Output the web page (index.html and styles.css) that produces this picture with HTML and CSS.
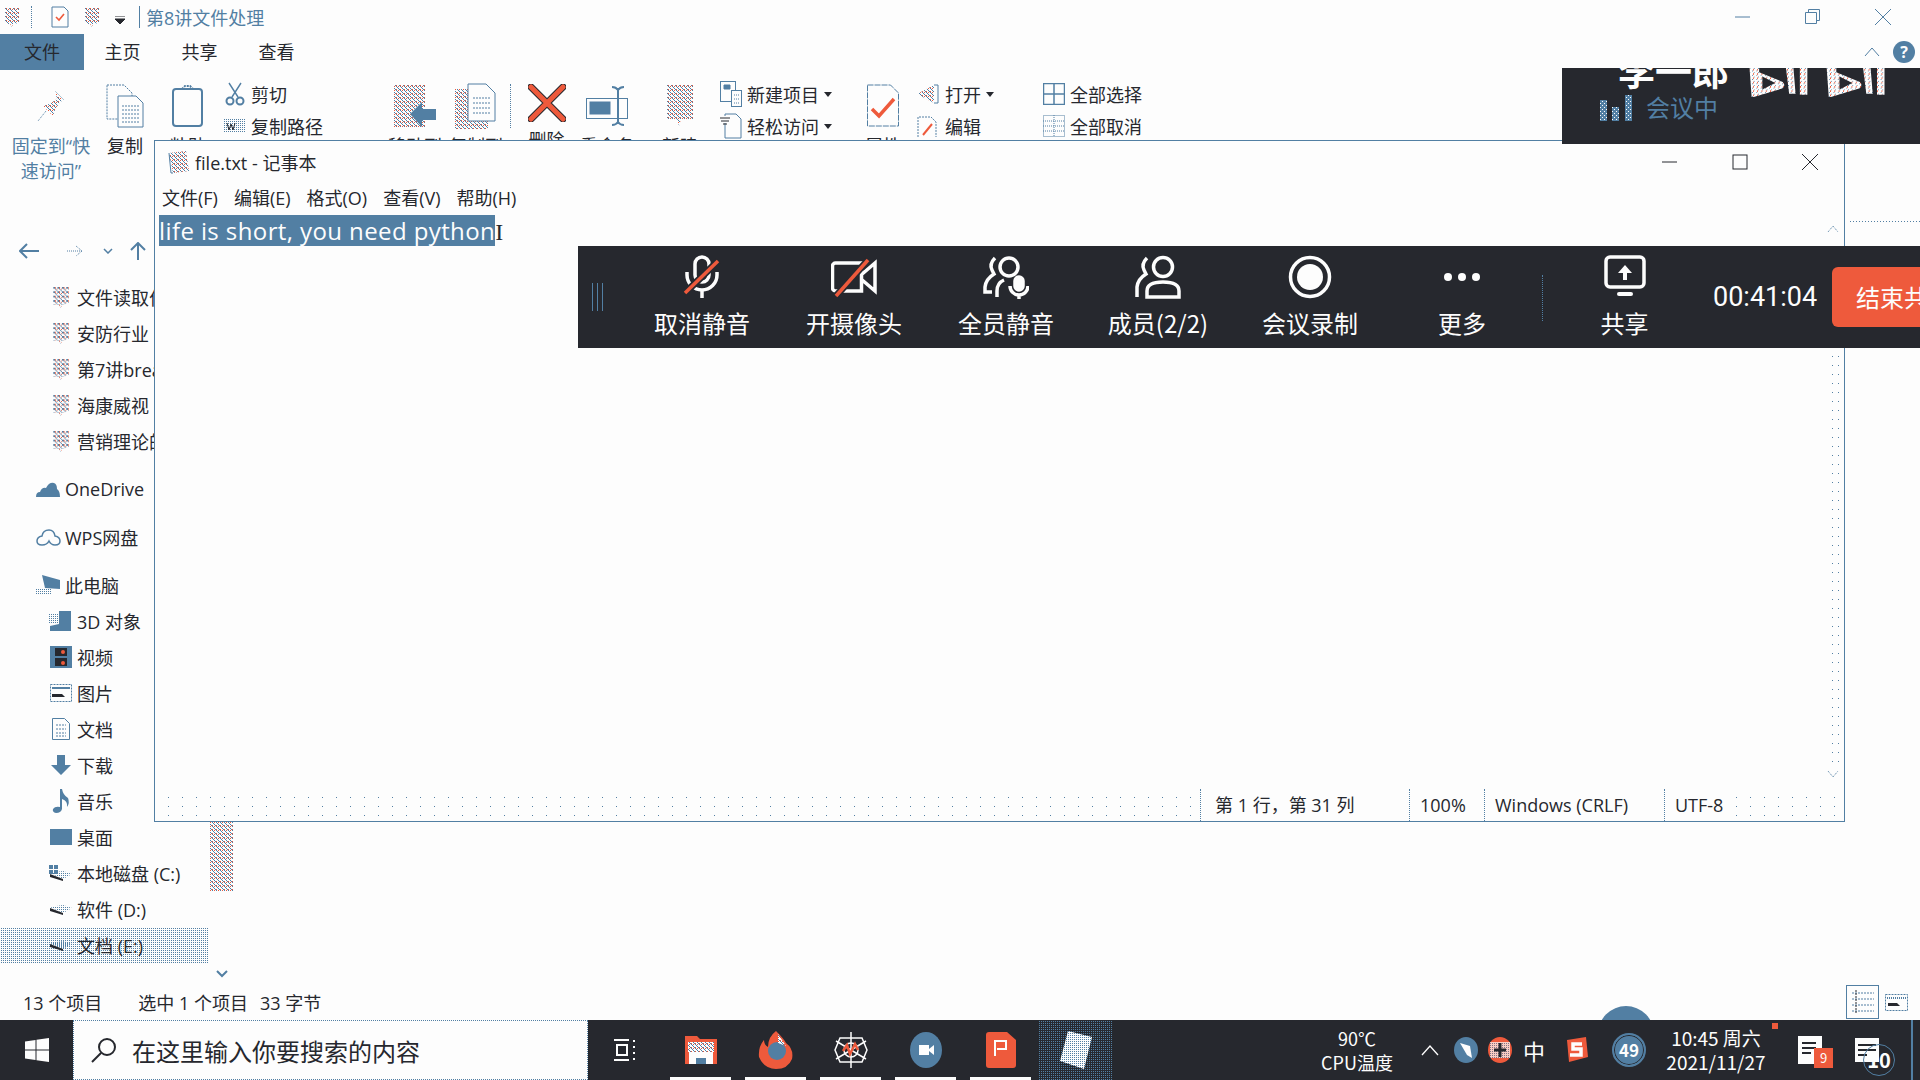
FILE: index.html
```html
<!DOCTYPE html>
<html lang="zh-CN">

<head>
    <meta charset="UTF-8">
    <title>file.txt - 记事本</title>
    <link rel="stylesheet" href="styles.css">
</head>

<body>
    <svg class="defs" width="0" height="0">
        <defs>
            <pattern id="dith" width="4" height="4" patternUnits="userSpaceOnUse" shape-rendering="crispEdges">
                <rect width="4" height="4" fill="#fdfdfd" />
                <rect width="1" height="1" fill="#527fa3" />
                <rect x="2" y="1" width="1" height="1" fill="#ee5a3c" />
                <rect x="1" y="1" width="1" height="1" fill="#527fa3" />
                <rect x="0" y="2" width="1" height="1" fill="#ee5a3c" />
                <rect x="2" y="2" width="1" height="1" fill="#527fa3" />
                <rect x="3" y="3" width="1" height="1" fill="#527fa3" />
            </pattern>
            <pattern id="dith-w" width="4" height="4" patternUnits="userSpaceOnUse" shape-rendering="crispEdges">
                <rect width="4" height="4" fill="#fdfdfd" />
                <rect width="1" height="1" fill="#527fa3" />
                <rect x="2" y="2" width="1" height="1" fill="#527fa3" />
                <rect x="3" y="1" width="1" height="1" fill="#ee5a3c" />
            </pattern>
            <pattern id="dith-b" width="4" height="4" patternUnits="userSpaceOnUse" shape-rendering="crispEdges">
                <rect width="4" height="4" fill="#527fa3" />
                <rect width="1" height="1" fill="#fdfdfd" />
                <rect x="2" y="2" width="1" height="1" fill="#fdfdfd" />
            </pattern>
            <pattern id="dots" width="2" height="2" patternUnits="userSpaceOnUse" shape-rendering="crispEdges">
                <rect width="1" height="1" fill="#527fa3" />
            </pattern>
            <pattern id="dots-w" width="2" height="2" patternUnits="userSpaceOnUse" shape-rendering="crispEdges">
                <rect width="2" height="2" fill="#fdfdfd" />
                <rect width="1" height="1" fill="#527fa3" />
            </pattern>
            <symbol id="ppt" viewBox="0 0 16 20">
                <path d="M1 1h14v15l-6 1-1 3-2-3H1z" fill="url(#dith)" />
            </symbol>
            <symbol id="drive" viewBox="0 0 24 12">
                <path d="M1 4l13 6 9-5-9-3z" fill="url(#dots)" />
                <path d="M1 5l13 5v2L1 8z" fill="#26282e" />
            </symbol>
        </defs>
    </svg>

    <!-- 资源管理器 -->
    <div class="explorer">
        <div class="title-bar">
            <svg class="qa-ppt" width="16" height="20"><use href="#ppt" /></svg>
            <span class="qa-sep"></span>
            <svg class="qa-check" width="18" height="22" viewBox="0 0 18 22">
                <path d="M1 1h12l4 4v16H1z" fill="none" stroke="#527fa3" />
                <path d="M5 11l3 3 5-6" fill="none" stroke="#ee5a3c" stroke-width="1.6" />
            </svg>
            <svg class="qa-ppt2" width="16" height="20"><use href="#ppt" /></svg>
            <svg class="qa-caret" width="10" height="8" viewBox="0 0 10 8">
                <path d="M0 0h10M0 3h10L5 8z" stroke="#26282e" fill="#26282e" />
            </svg>
            <span class="qa-sep qa-sep2"></span>
            <span class="title-text">第8讲文件处理</span>
            <div class="win-btns">
                <svg width="16" height="16" viewBox="0 0 16 16"><path d="M0 8h15" stroke="#527fa3" /></svg>
                <svg width="16" height="16" viewBox="0 0 16 16" fill="none" stroke="#527fa3"><path d="M.5 3.500h11v11H.5zM3.500 3V.5h11v11H12" /></svg>
                <svg width="16" height="16" viewBox="0 0 16 16"><path d="M0 0l16 16M16 0L0 16" stroke="#527fa3" /></svg>
            </div>
        </div>

        <div class="tabs">
            <div class="tab tab-file">文件</div>
            <div class="tab">主页</div>
            <div class="tab">共享</div>
            <div class="tab">查看</div>
            <div class="tab-side">
                <svg width="16" height="10" viewBox="0 0 16 10"><path d="M1 9l7-8 7 8" fill="none" stroke="#527fa3" /></svg>
                <div class="help">?</div>
            </div>
        </div>

        <div class="ribbon">
            <div class="big-btn big-blue">
                <div class="big-icon">
                    <svg width="30" height="36" viewBox="0 0 30 36">
                        <path d="M19 3l9 9-4 2-5 8-2 6-10-10 6-2 8-5z" fill="url(#dith)" />
                        <path d="M10 23L2 33" stroke="#527fa3" stroke-dasharray="1 1" />
                    </svg>
                </div>
                <span>固定到“快<br>速访问”</span>
            </div>
            <div class="big-btn">
                <div class="big-icon">
                    <svg width="38" height="44" viewBox="0 0 38 44" fill="#fdfdfd" stroke="#527fa3">
                        <path d="M1 1h17l8 8v26H1z" stroke-dasharray="2 1" />
                        <path d="M12 12h18l7 7v24H12z" />
                        <path d="M16 22h17M16 26h17M16 30h17M16 34h17M16 38h17" stroke-dasharray="2 1" />
                    </svg>
                </div>
                <span>复制</span>
            </div>
            <div class="big-btn">
                <div class="big-icon">
                    <svg width="32" height="44" viewBox="0 0 32 44" fill="none" stroke="#527fa3" stroke-width="2">
                        <rect x="1" y="5" width="29" height="37" rx="3" />
                        <path d="M10 5l3-3h5l3 3" stroke-dasharray="2 1" />
                    </svg>
                </div>
                <span>粘贴</span>
            </div>
            <div class="small-col">
                <div class="small-row">
                    <svg width="22" height="24" viewBox="-1 0 22 24" fill="none" stroke="#527fa3" stroke-width="2">
                        <path d="M4 1l9 14M16 1L7 15" stroke-width="1.400" />
                        <circle cx="5" cy="19" r="3.500" />
                        <circle cx="15" cy="19" r="3.500" />
                    </svg>
                    剪切
                </div>
                <div class="small-row">
                    <svg width="22" height="14" viewBox="0 0 22 14">
                        <rect width="22" height="14" fill="url(#dots)" />
                        <path d="M3 4l2 7 2-6 2 6 2-7" stroke="#26282e" fill="none" />
                    </svg>
                    复制路径
                </div>
            </div>
            <div class="big-btn">
                <div class="big-icon">
                    <svg width="42" height="44" viewBox="0 0 42 44">
                        <rect x="0" y="1" width="31" height="42" fill="url(#dith)" />
                        <path d="M16 30L28 18v7h14v11H28v7z" fill="#527fa3" />
                    </svg>
                </div>
                <span>移动到</span>
            </div>
            <div class="big-btn">
                <div class="big-icon">
                    <svg width="42" height="46" viewBox="0 0 42 46">
                        <rect x="0" y="6" width="33" height="40" fill="url(#dith)" />
                        <path d="M13 1h18l9 9v28H13z" fill="#fdfdfd" stroke="#527fa3" />
                        <path d="M18 15h18M18 20h18M18 25h18M18 30h18" stroke="#527fa3" stroke-dasharray="2 1" />
                    </svg>
                </div>
                <span>复制到</span>
            </div>
            <div class="big-btn cell-sep">
                <div class="big-icon">
                    <svg width="38" height="38" viewBox="0 0 38 38">
                        <path d="M3 3l32 32M35 3L3 35" stroke="#26282e" stroke-width="7" stroke-linecap="round" />
                        <path d="M3 3l32 32M35 3L3 35" stroke="#ee5a3c" stroke-width="5" stroke-linecap="round" />
                    </svg>
                </div>
                <span>删除</span>
            </div>
            <div class="big-btn">
                <div class="big-icon">
                    <svg width="42" height="40" viewBox="0 0 42 40" fill="none" stroke="#527fa3">
                        <rect x=".5" y="12.500" width="41" height="20" />
                        <rect x="4" y="16" width="20" height="12" fill="#527fa3" />
                        <path d="M32 2v36M26 1q4 0 6 3q2-3 6-3M26 39q4 0 6-3q2 3 6 3" stroke-width="2" />
                    </svg>
                </div>
                <span>重命名</span>
            </div>
            <div class="big-btn">
                <div class="big-icon">
                    <svg width="28" height="44" viewBox="0 0 28 44">
                        <path d="M1 1h26v34H15l-2 7-2-7H1z" fill="url(#dith)" />
                    </svg>
                </div>
                <span>新建</span>
            </div>
            <div class="small-col">
                <div class="small-row">
                    <svg width="22" height="26" viewBox="0 0 22 26" fill="#fdfdfd" stroke="#527fa3">
                        <rect x=".5" y=".5" width="15" height="20" />
                        <rect x="11.500" y="9.500" width="10" height="16" />
                        <path d="M14 14h6M14 18h6M14 22h6" stroke-dasharray="1 1" />
                        <path d="M4 4h6v4H4z" fill="#527fa3" />
                    </svg>
                    新建项目<i class="caret"></i>
                </div>
                <div class="small-row">
                    <svg width="22" height="26" viewBox="0 0 22 26" fill="none" stroke="#527fa3">
                        <path d="M5 10v15h16V6l-5-5H5v2" />
                        <path d="M0 5h10M1 8h8M3 11h4" stroke="#26282e" />
                    </svg>
                    轻松访问<i class="caret"></i>
                </div>
            </div>
            <div class="big-btn">
                <div class="big-icon">
                    <svg width="32" height="44" viewBox="0 0 32 44" fill="none">
                        <path d="M.5 1h23l8 8v33H.5z" stroke="#527fa3" stroke-dasharray="6 1" />
                        <path d="M5 25l7 7 15-17" stroke="#ee5a3c" stroke-width="3.500" />
                    </svg>
                </div>
                <span>属性</span>
            </div>
            <div class="small-col">
                <div class="small-row">
                    <svg width="24" height="24" viewBox="0 0 24 24">
                        <path d="M1 12l17-9v18z" fill="url(#dith)" />
                        <path d="M18 3h4v18h-4" fill="none" stroke="#527fa3" />
                    </svg>
                    打开<i class="caret"></i>
                </div>
                <div class="small-row">
                    <svg width="24" height="24" viewBox="0 0 24 24" fill="none">
                        <path d="M2 23V3h13l5 5v15" stroke="#527fa3" stroke-dasharray="2 1" />
                        <path d="M7 21l9-11" stroke="#ee5a3c" stroke-width="2" />
                    </svg>
                    编辑
                </div>
            </div>
            <div class="small-col">
                <div class="small-row">
                    <svg width="22" height="22" viewBox="0 0 22 22" fill="none" stroke="#527fa3">
                        <path d="M.5.500h21v21H.5zM11 0v22M0 11h22" stroke-width="1.500" />
                    </svg>
                    全部选择
                </div>
                <div class="small-row">
                    <svg width="22" height="22" viewBox="0 0 22 22" fill="none" stroke="#527fa3" stroke-dasharray="1 1">
                        <path d="M.5.500h21v21H.5zM11 0v22M0 11h22M0 6h22M0 16h22" />
                    </svg>
                    全部取消
                </div>
            </div>
        </div>

        <div class="address">
            <svg width="20" height="16" viewBox="0 0 20 16"><path d="M8 1L1 8l7 7M1 8h19" fill="none" stroke="#527fa3" stroke-width="2" /></svg>
            <svg class="addr-next" width="16" height="12" viewBox="0 0 16 12"><path d="M9 1l6 5-6 5M0 6h15" fill="none" stroke="#527fa3" stroke-dasharray="1 1" /></svg>
            <svg class="addr-down" width="10" height="6" viewBox="0 0 10 6"><path d="M1 1l4 4 4-4" fill="none" stroke="#527fa3" stroke-width="1.500" /></svg>
            <svg class="addr-up" width="16" height="18" viewBox="0 0 16 18"><path d="M1 8l7-7 7 7M8 1v17" fill="none" stroke="#527fa3" stroke-width="2" /></svg>
        </div>

        <div class="middle">
            <div class="tree">
                <div class="row"><svg width="18" height="22"><use href="#ppt" /></svg>文件读取作业</div>
                <div class="row"><svg width="18" height="22"><use href="#ppt" /></svg>安防行业</div>
                <div class="row"><svg width="18" height="22"><use href="#ppt" /></svg>第7讲break</div>
                <div class="row"><svg width="18" height="22"><use href="#ppt" /></svg>海康威视</div>
                <div class="row"><svg width="18" height="22"><use href="#ppt" /></svg>营销理论的</div>
                <div class="row top-row group-gap">
                    <svg width="24" height="16" viewBox="0 0 24 16"><path d="M0 16q0-5 4-5 2-5 6-4 3-6 8-5 3 1 3 6 3 2 3 8z" fill="#527fa3" /></svg>OneDrive
                </div>
                <div class="row top-row group-gap">
                    <svg width="25" height="18" viewBox="0 0 25 18"><path d="M6 17q-5 0-5-4 0-4 5-5 1-6 7-6 5 0 6 6 5 1 5 5 0 4-5 4-4 0-6-4-2 4-7 4z" fill="none" stroke="#527fa3" stroke-width="1.500" /></svg>WPS网盘
                </div>
                <div class="row top-row group-gap">
                    <svg width="24" height="20" viewBox="0 0 24 20"><path d="M6 0l18 5v9l-15-1z" fill="#527fa3" /><rect y="14" width="16" height="6" fill="url(#dots)" /></svg>此电脑
                </div>
                <div class="row">
                    <svg width="24" height="22" viewBox="0 0 24 22"><path d="M10 1h12v20H1v-5l9-2z" fill="#527fa3" /><rect y="3" width="10" height="11" fill="url(#dots)" /></svg>3D 对象
                </div>
                <div class="row">
                    <svg width="22" height="22" viewBox="0 0 22 22"><rect width="22" height="22" fill="#527fa3" /><rect x="5" y="2" width="12" height="8" fill="#26282e" /><rect x="5" y="12" width="12" height="8" fill="#26282e" /><circle cx="13" cy="6" r="2" fill="#ee5a3c" /><circle cx="13" cy="17" r="2" fill="#ee5a3c" /></svg>视频
                </div>
                <div class="row">
                    <svg width="22" height="18" viewBox="0 0 22 18"><rect x=".5" y=".5" width="21" height="17" fill="none" stroke="#527fa3" stroke-dasharray="2 1" /><path d="M2 4h18" stroke="#527fa3" stroke-width="2" /><path d="M2 10h10l3 3H2z" fill="#26282e" /></svg>图片
                </div>
                <div class="row">
                    <svg width="18" height="22" viewBox="0 0 18 22"><path d="M.5.500h12l5 5v16H.5z" fill="none" stroke="#527fa3" /><path d="M4 7h10M4 11h10M4 15h10M4 18h10" stroke="#527fa3" stroke-dasharray="2 1" /></svg>文档
                </div>
                <div class="row">
                    <svg width="20" height="20" viewBox="0 0 20 20"><path d="M6 0h8v10h6l-10 10L0 10h6z" fill="#527fa3" /></svg>下载
                </div>
                <div class="row">
                    <svg width="18" height="24" viewBox="0 0 18 24"><path d="M8 0h2q1 6 6 9 2 5-1 9 1-6-5-8v10q-1 4-6 4-4-1-3-4 2-3 7-2z" fill="#527fa3" /></svg>音乐
                </div>
                <div class="row">
                    <svg width="22" height="16" viewBox="0 0 22 16"><rect width="22" height="16" fill="#527fa3" /></svg>桌面
                </div>
                <div class="row">
                    <svg width="24" height="16" viewBox="0 0 24 16"><path d="M0 0h4v4H0zM5 0h4v4H5zM0 5h4v4H0zM5 5h4v4H5z" fill="#527fa3" /><use href="#drive" y="4" width="24" height="12" /></svg>本地磁盘 (C:)
                </div>
                <div class="row">
                    <svg width="24" height="12"><use href="#drive" /></svg>软件 (D:)
                </div>
                <div class="row row-selected">
                    <svg width="24" height="12"><use href="#drive" /></svg>文档 (E:)
                </div>
            </div>
            <div class="tree-scroll">
                <svg class="thumb" width="23" height="103"><rect width="23" height="103" fill="url(#dith)" /></svg>
                <svg class="tree-down" width="12" height="8" viewBox="0 0 12 8"><path d="M1 1l5 5 5-5" fill="none" stroke="#527fa3" stroke-width="2" /></svg>
            </div>
        </div>

        <div class="status">
            <span class="status-count">13 个项目</span>
            <span class="status-sel">选中 1 个项目</span>
            <span class="status-size">33 字节</span>
            <div class="view-btns">
                <div class="view-on">
                    <svg width="24" height="24" viewBox="0 0 24 24" stroke="#527fa3" stroke-dasharray="2 1"><path d="M1 3h22M1 9h22M1 15h22M1 21h22" /><path d="M5 0v24" stroke="#26282e" /></svg>
                </div>
                <svg width="23" height="17" viewBox="0 0 23 17"><rect x=".5" y=".5" width="22" height="16" fill="none" stroke="#527fa3" stroke-dasharray="2 1" /><path d="M2 4h19" stroke="#527fa3" stroke-dasharray="1 1" stroke-width="2" /><path d="M3 9h9l3 3H3z" fill="#26282e" /></svg>
            </div>
        </div>
    </div>

    <div class="bubble"></div>

    <!-- 记事本窗口 -->
    <div class="notepad">
        <div class="np-title">
            <svg width="22" height="24" viewBox="0 0 22 24"><path d="M1 3l17-2 3 20-16 2z" fill="url(#dith)" /><path d="M1 3l2 20h2" fill="none" stroke="#527fa3" /></svg>
            <span class="np-name">file.txt - 记事本</span>
            <div class="np-btns">
                <svg width="16" height="16" viewBox="0 0 16 16"><path d="M0 8h15" stroke="#26282e" /></svg>
                <svg width="16" height="16" viewBox="0 0 16 16"><rect x="1" y="1" width="14" height="14" fill="none" stroke="#26282e" /></svg>
                <svg width="16" height="16" viewBox="0 0 16 16"><path d="M0 0l16 16M16 0L0 16" stroke="#26282e" /></svg>
            </div>
        </div>
        <div class="np-menu">
            <span>文件(F)</span>
            <span>编辑(E)</span>
            <span>格式(O)</span>
            <span>查看(V)</span>
            <span>帮助(H)</span>
        </div>
        <div class="np-body">
            <span class="np-text">life is short, you need python</span><span class="np-caret">I</span>
            <svg class="np-up" width="12" height="8" viewBox="0 0 12 8"><path d="M1 7l5-6 5 6" fill="none" stroke="#527fa3" stroke-dasharray="1 1" /></svg>
            <div class="np-scroll"></div>
            <svg class="np-down" width="12" height="8" viewBox="0 0 12 8"><path d="M1 1l5 6 5-6" fill="none" stroke="#527fa3" stroke-dasharray="1 1" /></svg>
        </div>
        <div class="np-status">
            <span class="np-cell np-pos">第 1 行，第 31 列</span>
            <span class="np-cell np-zoom">100%</span>
            <span class="np-cell np-crlf">Windows (CRLF)</span>
            <span class="np-cell">UTF-8</span>
        </div>
    </div>

    <!-- 会议小窗 -->
    <div class="meet-card">
        <span class="meet-name">李一郎</span>
        <svg class="bili" width="136" height="30" viewBox="0 0 126 28">
            <path d="M0 0h9v4l22 9q3 3 0 6L4 27H2z" fill="url(#dith-w)" />
            <path d="M12 8v12l12-6z" fill="#26282e" />
            <path d="M34 0h7l2 24h-6zM47 0h7v25h-7z" fill="url(#dith-w)" />
            <path d="M72 0h9v4l22 9q3 3 0 6L76 27h-2z" fill="url(#dith-w)" />
            <path d="M84 8v12l12-6z" fill="#26282e" />
            <path d="M106 0h7l2 24h-6zM119 0h7v25h-7z" fill="url(#dith-w)" />
        </svg>
        <div class="meet-state">
            <svg width="32" height="26" viewBox="0 0 32 26">
                <rect y="5" width="7" height="21" fill="url(#dith-b)" />
                <rect x="12" y="12" width="7" height="14" fill="url(#dith-b)" />
                <rect x="25" width="7" height="26" fill="url(#dith-b)" />
            </svg>
            会议中
        </div>
    </div>

    <!-- 会议工具条 -->
    <div class="meet-bar">
        <div class="grip"></div>
        <div class="tool">
            <svg width="44" height="44" viewBox="0 0 44 44" fill="none" stroke="#fdfdfd" stroke-width="3.500">
                <rect x="15" y="2" width="14" height="25" rx="7" />
                <path d="M7 17v3a15 15 0 0 0 30 0v-3M22 35v8" />
                <path d="M5 38L38 6" stroke="#26282e" stroke-width="7" />
                <path d="M5 38L38 6" stroke="#ee5a3c" stroke-width="3.500" />
            </svg>
            <span>取消静音</span>
        </div>
        <div class="tool">
            <svg width="46" height="44" viewBox="0 0 46 44" fill="none" stroke="#fdfdfd" stroke-width="3.500">
                <path d="M1.500 11a3 3 0 0 1 3-3h26v28h-26a3 3 0 0 1-3-3zM30 20L44 8v28L30 24" />
                <path d="M5 41L37 5" stroke="#26282e" stroke-width="7" />
                <path d="M5 41L37 5" stroke="#ee5a3c" stroke-width="3.500" />
            </svg>
            <span>开摄像头</span>
        </div>
        <div class="tool">
            <svg width="46" height="44" viewBox="0 0 46 44" fill="none" stroke="#fdfdfd" stroke-width="3.500">
                <circle cx="26" cy="12" r="9" />
                <path d="M12 3q-6 6-3 12l2 4q-8 5-9 13v5h7M14 42v-6q0-8 7-11" />
                <rect x="32" y="22" width="8" height="13" rx="4" fill="#fdfdfd" />
                <path d="M27 31a9 9 0 0 0 18 0M36 40v4" />
            </svg>
            <span>全员静音</span>
        </div>
        <div class="tool">
            <svg width="46" height="44" viewBox="0 0 46 44" fill="none" stroke="#fdfdfd" stroke-width="3.500">
                <circle cx="28" cy="12" r="9.500" />
                <path d="M12 3q-6 6-3 12l2 4q-8 5-9 13v10" />
                <path d="M12 42V36q0-9 16-9t16 9v6z" />
            </svg>
            <span>成员(2/2)</span>
        </div>
        <div class="tool">
            <svg width="44" height="44" viewBox="0 0 44 44">
                <circle cx="22" cy="22" r="19.500" fill="none" stroke="#fdfdfd" stroke-width="3.500" />
                <circle cx="22" cy="22" r="13" fill="#fdfdfd" />
            </svg>
            <span>会议录制</span>
        </div>
        <div class="tool">
            <svg width="44" height="44" viewBox="0 0 44 44" fill="#fdfdfd">
                <circle cx="8" cy="22" r="4" />
                <circle cx="22" cy="22" r="4" />
                <circle cx="36" cy="22" r="4" />
            </svg>
            <span>更多</span>
        </div>
        <div class="bar-sep"></div>
        <div class="tool tool-share">
            <svg width="44" height="44" viewBox="0 0 44 44">
                <rect x="3" y="2" width="38" height="30" rx="4" fill="none" stroke="#fdfdfd" stroke-width="3.500" />
                <path d="M22 10l7 8h-5v7h-4v-7h-5z" fill="#fdfdfd" />
                <rect x="14" y="37" width="16" height="4" rx="2" fill="#fdfdfd" />
            </svg>
            <span>共享</span>
        </div>
        <div class="timer">00:41:04</div>
        <div class="end-btn">结束共享</div>
    </div>

    <!-- 任务栏 -->
    <div class="taskbar">
        <div class="start">
            <svg width="24" height="24" viewBox="0 0 24 24" fill="#fdfdfd"><path d="M0 3.500l10.500-1.500v9.500H0zM11.500 1.800L24 0v11.500H11.500zM0 12.500h10.500V22L0 20.500zM11.500 12.500H24V24l-12.500-1.800z" /></svg>
        </div>
        <div class="search">
            <svg width="26" height="26" viewBox="0 0 26 26" fill="none" stroke="#26282e" stroke-width="2"><circle cx="16" cy="10" r="8" /><path d="M10 16L1 25" /></svg>
            <span>在这里输入你要搜索的内容</span>
        </div>
        <div class="task">
            <svg width="24" height="24" viewBox="0 0 24 24" fill="none" stroke="#fdfdfd"><path d="M0 2h15M0 22h15M3 7h10v10H3zM20 2v2M20 8v2M20 14v2M20 20v2" stroke-width="2" /></svg>
        </div>
        <div class="task task-open">
            <svg width="32" height="32" viewBox="0 0 32 32"><path d="M0 2h12l3 3h17v25H0z" fill="#ee5a3c" /><rect x="3" y="8" width="26" height="10" fill="url(#dith)" /><path d="M4 18h24v12h-7v-6H11v6H4z" fill="#fdfdfd" /><rect x="11" y="24" width="10" height="6" fill="#527fa3" /></svg>
        </div>
        <div class="task task-open">
            <svg width="36" height="38" viewBox="0 0 36 38"><path d="M18 0q8 8 10 12 8 6 6 16-4 10-16 10T1 26Q0 16 6 9q0 5 4 7 0-10 8-16z" fill="#ee5a3c" /><circle cx="19" cy="20" r="9" fill="#527fa3" /><path d="M20 3l8 12-8-3z" fill="url(#dith)" /></svg>
        </div>
        <div class="task task-open">
            <svg width="34" height="36" viewBox="0 0 34 36" fill="none" stroke="#fdfdfd" stroke-width="1.500"><path d="M17 0v36M2 9l30 18M32 9L2 27M6 6l22 0 5 12-5 12H6L1 18z" /><circle cx="17" cy="18" r="7" /><path d="M9 19l4-6 3 9 5-10 3 6" stroke="#ee5a3c" stroke-width="2.500" /></svg>
        </div>
        <div class="task task-open">
            <svg width="32" height="36" viewBox="0 0 32 36"><ellipse cx="16" cy="18" rx="16" ry="18" fill="#527fa3" /><path d="M9 13h10v10H9zM19 17l5-4v10l-5-4z" fill="#fdfdfd" /></svg>
        </div>
        <div class="task task-open">
            <svg width="30" height="36" viewBox="0 0 30 36"><path d="M3 0h18l9 8v25a3 3 0 0 1-3 3H3a3 3 0 0 1-3-3V3a3 3 0 0 1 3-3z" fill="#ee5a3c" /><path d="M9 24V9h11v8H11" fill="none" stroke="#fdfdfd" stroke-width="2" /></svg>
        </div>
        <div class="task task-active">
            <svg width="32" height="38" viewBox="0 0 32 38"><path d="M8 0l24 6-8 32L0 30z" fill="url(#dots-w)" /></svg>
        </div>

        <div class="tray">
            <div class="tray-cpu">90℃<br>CPU温度</div>
            <svg class="tray-chev" width="18" height="11" viewBox="0 0 18 11"><path d="M1 10l8-9 8 9" fill="none" stroke="#fdfdfd" stroke-width="1.300" /></svg>
            <svg class="tray-ico" width="24" height="26" viewBox="0 0 24 26"><ellipse cx="12" cy="13" rx="12" ry="13" fill="#527fa3" /><path d="M6 6l10 3 2 12-5-3z" fill="#fdfdfd" /></svg>
            <svg class="tray-ico" width="24" height="26" viewBox="0 0 24 26"><ellipse cx="12" cy="13" rx="12" ry="13" fill="#ee5a3c" /><rect x="2" y="5" width="20" height="16" fill="url(#dots-w)" opacity=".7" /><path d="M12 6v14M6 13h12" stroke="#26282e" stroke-width="3" /></svg>
            <span class="tray-ime">中</span>
            <svg class="tray-s" width="24" height="26" viewBox="0 0 24 26"><path d="M3 3l19-3 2 20-19 5z" fill="#ee5a3c" /><path d="M18 7H9v5h8v6H6" fill="none" stroke="#fdfdfd" stroke-width="3.500" /></svg>
            <div class="tray-badge">49</div>
            <div class="tray-clock">10:45 周六<br>2021/11/27</div>
            <div class="tray-dot"></div>
            <div class="note-one">
                <svg width="24" height="28" viewBox="0 0 24 28"><rect width="24" height="28" fill="#fdfdfd" /><path d="M4 7h14M4 12h14M4 17h9" stroke="#26282e" stroke-width="2" /></svg>
                <span class="note-num">9</span>
            </div>
            <div class="note-two">
                <svg width="24" height="24" viewBox="0 0 24 24"><rect width="24" height="24" fill="#fdfdfd" /><path d="M3 7h18M3 12h18M3 17h9" stroke="#26282e" stroke-width="2" /></svg>
                <span class="note-ring">10</span>
            </div>
        </div>
    </div>
</body>

</html>
```

FILE: styles.css
```css
* {
    margin: 0;
    padding: 0;
    box-sizing: border-box;
}

body {
    position: relative;
    width: 1920px;
    height: 1080px;
    overflow: hidden;
    background: #fdfdfd;
    color: #26282e;
    font-family: "Open Sans", "Noto Sans CJK SC", sans-serif;
    font-size: 18px;
}

svg {
    display: block;
    flex: none;
}

.defs {
    position: absolute;
}

/* 资源管理器 */
.explorer {
    display: flex;
    flex-direction: column;
    height: 1020px;
}

.title-bar {
    display: flex;
    align-items: center;
    flex: none;
    height: 34px;
    padding-left: 4px;
}

.qa-sep {
    width: 1px;
    height: 22px;
    margin-left: 11px;
    border-left: 1px dotted #527fa3;
}

.qa-check {
    margin-left: 19px;
}

.qa-ppt2 {
    margin-left: 15px;
}

.qa-caret {
    margin-left: 15px;
    margin-top: 6px;
}

.qa-sep2 {
    margin-left: 14px;
    border-left-style: solid;
}

.title-text {
    margin-left: 6px;
    color: #527fa3;
}

.win-btns {
    display: flex;
    gap: 54px;
    margin-left: auto;
    margin-right: 29px;
}

.tabs {
    display: flex;
    flex: none;
    height: 36px;
}

.tab {
    width: 77px;
    line-height: 36px;
    text-align: center;
}

.tab-file {
    width: 84px;
    background-color: #527fa3;
    background-image: radial-gradient(#26282e 0.6px, transparent 0.7px);
    background-size: 4px 4px;
}

.tab-side {
    display: flex;
    align-items: center;
    gap: 13px;
    margin-left: auto;
    margin-right: 5px;
}

.help {
    width: 22px;
    height: 22px;
    border-radius: 50%;
    background: #527fa3;
    color: #fdfdfd;
    font-size: 16px;
    font-weight: 700;
    line-height: 22px;
    text-align: center;
}

.ribbon {
    display: grid;
    flex: none;
    grid-template-columns: 90px 63px 61px 166px 61px 59px 72px 73px 65px 138px 58px 127px 1fr;
    height: 165px;
    padding: 14px 0 0 10px;
    /* 右侧被遮住的一段虚线 */
    background: repeating-linear-gradient(90deg, #527fa3 0 1px, transparent 1px 3px) no-repeat right 151px / 70px 1px;
}

.big-btn {
    display: flex;
    flex-direction: column;
    align-items: center;
    width: 50px;
    line-height: 25px;
    white-space: nowrap;
}

.big-blue {
    width: 82px;
    color: #527fa3;
    text-align: center;
}

.big-icon {
    display: flex;
    align-items: center;
    justify-content: center;
    height: 44px;
    margin-bottom: 6px;
}

.cell-sep {
    width: 72px;
    height: 44px;
    border-left: 1px dotted #527fa3;
}

.small-col {
    display: flex;
    flex-direction: column;
    margin-top: -6px;
}

.small-row {
    display: flex;
    align-items: center;
    gap: 5px;
    height: 32px;
    white-space: nowrap;
}

.caret {
    width: 0;
    height: 0;
    border: 4px solid transparent;
    border-top: 5px solid #26282e;
    border-bottom: 0;
}

.address {
    display: flex;
    align-items: center;
    flex: none;
    height: 40px;
    margin-top: -4px;
    padding-left: 19px;
}

.addr-next {
    margin-left: 28px;
}

.addr-down {
    margin-left: 20px;
}

.addr-up {
    margin-left: 17px;
}

.middle {
    display: flex;
    flex: 1;
    padding-top: 8px;
}

.tree {
    width: 208px;
}

.row {
    display: grid;
    grid-template-columns: 24px auto;
    justify-content: start;
    align-items: center;
    justify-items: center;
    column-gap: 4px;
    height: 36px;
    padding-left: 49px;
    white-space: nowrap;
    overflow: hidden;
}

.top-row {
    padding-left: 36px;
    column-gap: 5px;
}

.group-gap {
    margin-top: 12px;
}

.row-selected {
    background-image: linear-gradient(90deg, #fdfdfd 1px, transparent 1px), linear-gradient(#fdfdfd 1px, #527fa3 1px);
    background-size: 2px 2px;
}

.tree-scroll {
    width: 26px;
}

.thumb {
    margin-left: 2px;
    margin-top: 509px;
}

.tree-down {
    margin: 79px 0 0 8px;
}

.status {
    display: flex;
    align-items: center;
    flex: none;
    height: 36px;
    padding-left: 23px;
}

.status-sel {
    margin-left: 36px;
}

.status-size {
    margin-left: 12px;
}

.view-btns {
    display: flex;
    align-items: center;
    gap: 6px;
    margin-left: auto;
    margin-right: 12px;
}

.view-on {
    display: flex;
    align-items: center;
    justify-content: center;
    width: 33px;
    height: 34px;
    border: 1px solid #527fa3;
}

.bubble {
    position: absolute;
    left: 1598px;
    top: 1006px;
    width: 56px;
    height: 56px;
    border-radius: 50%;
    background: #527fa3;
}

/* 记事本 */
.notepad {
    position: absolute;
    left: 154px;
    top: 140px;
    display: flex;
    flex-direction: column;
    width: 1691px;
    height: 682px;
    border: 1px solid #527fa3;
    background: #fdfdfd;
}

.np-title {
    display: flex;
    align-items: center;
    flex: none;
    height: 42px;
    padding-left: 13px;
}

.np-name {
    margin-left: 5px;
}

.np-btns {
    display: flex;
    gap: 54px;
    margin-left: auto;
    margin-right: 26px;
}

.np-menu {
    display: flex;
    flex: none;
    gap: 16px;
    height: 30px;
    padding-left: 7px;
    line-height: 30px;
}

.np-body {
    position: relative;
    flex: 1;
    padding: 2px 0 0 4px;
    font-size: 24px;
    letter-spacing: 0.4px;
    line-height: 31px;
    white-space: nowrap;
}

.np-text {
    display: inline-block;
    background: #527fa3;
    color: #fdfdfd;
}

.np-caret {
    font-family: "Liberation Serif", serif;
}

.np-up {
    position: absolute;
    right: 5px;
    top: 12px;
}

.np-down {
    position: absolute;
    right: 5px;
    bottom: 11px;
}

.np-scroll {
    position: absolute;
    right: 3px;
    top: 135px;
    width: 14px;
    height: 420px;
    background-image: linear-gradient(90deg, #fdfdfd 5px, transparent 5px), linear-gradient(#fdfdfd 8px, #527fa3 8px);
    background-size: 6px 9px;
}

.np-status {
    display: flex;
    flex: none;
    height: 32px;
    padding-left: 1045px;
    line-height: 32px;
    white-space: nowrap;
    background-image: linear-gradient(90deg, #fdfdfd 13px, transparent 13px), linear-gradient(#fdfdfd 8px, #527fa3 8px);
    background-size: 14px 9px;
}

.np-cell {
    padding-left: 10px;
    border-left: 1px dotted #527fa3;
    background: #fdfdfd;
}

.np-pos {
    width: 209px;
    padding-left: 14px;
}

.np-zoom {
    width: 75px;
}

.np-crlf {
    width: 180px;
}

/* 会议小窗 */
.meet-card {
    position: absolute;
    left: 1562px;
    top: 68px;
    width: 358px;
    height: 76px;
    overflow: hidden;
    background: #26282e;
}

.meet-name {
    position: absolute;
    left: 56px;
    top: -15px;
    color: #fdfdfd;
    font-size: 37px;
    font-weight: 700;
    line-height: 38px;
}

.bili {
    position: absolute;
    left: 187px;
    top: 0;
}

.meet-state {
    position: absolute;
    left: 38px;
    top: 25px;
    display: flex;
    align-items: center;
    gap: 14px;
    color: #527fa3;
    font-size: 24px;
    line-height: 30px;
}

/* 会议工具条 */
.meet-bar {
    position: absolute;
    left: 578px;
    top: 246px;
    display: flex;
    align-items: center;
    width: 1342px;
    height: 102px;
    overflow: hidden;
    background: #26282e;
    color: #fdfdfd;
}

.grip {
    flex: none;
    width: 14px;
    height: 28px;
    margin: 0 20px 0 14px;
    background-image: linear-gradient(90deg, #527fa3 1px, transparent 1px);
    background-size: 5px 100%;
}

.tool {
    display: flex;
    flex: none;
    flex-direction: column;
    align-items: center;
    width: 152px;
    font-family: "Noto Sans CJK SC", sans-serif;
    font-size: 24px;
    line-height: 34px;
    white-space: nowrap;
}

.tool svg {
    margin-bottom: 7px;
}

.bar-sep {
    flex: none;
    width: 1px;
    height: 46px;
    margin: 2px 0 0 4px;
    border-left: 1px dotted #527fa3;
}

.tool-share {
    width: 163px;
}

.timer {
    flex: none;
    width: 126px;
    padding-left: 7px;
    font-family: Roboto, sans-serif;
    font-size: 27px;
}

.end-btn {
    flex: none;
    width: 130px;
    height: 60px;
    padding-left: 24px;
    border-radius: 6px;
    background: #ee5a3c;
    font-family: "Noto Sans CJK SC", sans-serif;
    font-size: 24px;
    line-height: 60px;
    white-space: nowrap;
}

/* 任务栏 */
.taskbar {
    display: flex;
    align-items: stretch;
    position: absolute;
    left: 0;
    top: 1020px;
    width: 1920px;
    height: 60px;
    background: #26282e;
    color: #fdfdfd;
}

.start {
    display: flex;
    align-items: center;
    justify-content: center;
    width: 73px;
}

.search {
    display: flex;
    align-items: center;
    gap: 15px;
    width: 515px;
    padding-left: 17px;
    border: 1px dotted #527fa3;
    background: #fdfdfd;
    color: #26282e;
    font-family: "Noto Sans CJK SC", sans-serif;
    font-size: 24px;
}

.task {
    position: relative;
    display: flex;
    align-items: center;
    justify-content: center;
    width: 75px;
}

.task-open::after {
    content: "";
    position: absolute;
    left: 7px;
    right: 7px;
    bottom: 0;
    height: 3px;
    background: #fdfdfd;
}

.task-active {
    background-color: #26282e;
    background-image: linear-gradient(90deg, #26282e 1px, transparent 1px), linear-gradient(#26282e 1px, #527fa3 1px);
    background-size: 2px 2px;
}

.tray {
    position: relative;
    display: flex;
    align-items: center;
    flex: 1;
    margin-right: 7px;
    padding-left: 197px;
    border-right: 2px solid #527fa3;
    font-family: "Noto Sans CJK SC", sans-serif;
    line-height: 24px;
}

.tray-cpu {
    flex: none;
    width: 94px;
    text-align: center;
}

.tray-chev {
    margin: 0 15px 0 17px;
}

.tray-ico {
    margin-right: 10px;
}

.tray-ime {
    flex: none;
    width: 34px;
    margin-left: -5px;
    font-size: 22px;
    text-align: center;
}

.tray-s {
    margin: 0 24px 0 13px;
}

.tray-badge {
    flex: none;
    width: 34px;
    height: 34px;
    border: 2px solid #527fa3;
    border-radius: 50%;
    background: #527fa3;
    box-shadow: inset 0 0 0 1px #26282e;
    font-size: 17px;
    font-weight: 700;
    line-height: 30px;
    text-align: center;
}

.tray-clock {
    flex: none;
    width: 104px;
    margin-left: 18px;
    font-size: 19px;
    text-align: center;
    white-space: nowrap;
}

.tray-dot {
    position: absolute;
    left: 659px;
    top: 3px;
    width: 6px;
    height: 6px;
    background: #ee5a3c;
}

.note-one {
    position: relative;
    margin-left: 30px;
}

.note-num {
    position: absolute;
    left: 16px;
    top: 12px;
    width: 19px;
    height: 20px;
    background: #ee5a3c;
    font-size: 13px;
    line-height: 20px;
    text-align: center;
}

.note-two {
    position: relative;
    margin-left: 33px;
}

.note-ring {
    position: absolute;
    left: 8px;
    top: 6px;
    width: 32px;
    height: 32px;
    border: 1px solid #527fa3;
    border-radius: 50%;
    font-size: 20px;
    font-weight: 700;
    line-height: 30px;
    text-align: center;
}
```
